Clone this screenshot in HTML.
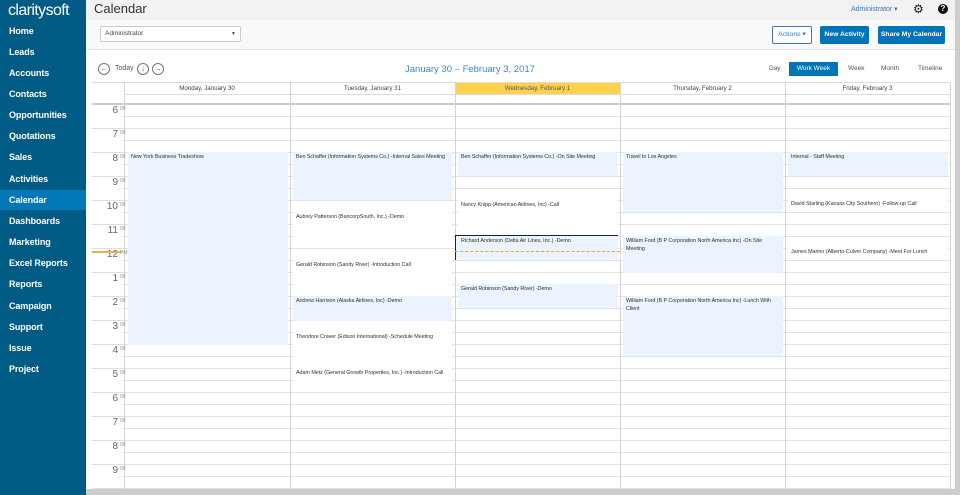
<!DOCTYPE html>
<html><head><meta charset="utf-8"><style>
*{margin:0;padding:0;box-sizing:border-box}
body{width:960px;height:495px;overflow:hidden;background:#ccc;font-family:"Liberation Sans",sans-serif;position:relative}
.a{position:absolute}
#side{left:0;top:0;width:86px;height:495px;background:#005b85}
#side .logo{left:8px;top:2px;color:#fff;font-size:16px;letter-spacing:-0.6px}
#side .it{left:9px;color:#fff;font-size:9px;font-weight:bold;height:21px;line-height:21px;letter-spacing:-0.1px}
#main{left:86px;top:0;width:869px;height:489px;background:#fff}
.ev{position:absolute;font-size:5.4px;color:#333;padding:2px 3px;line-height:7.5px;letter-spacing:-0.05px}
.bl{background:#eaf3fe}
.wh{background:#fff}
.hd{position:absolute;top:82px;height:12px;font-size:6.2px;color:#444;text-align:center;line-height:12px;border-top:1px solid #ddd}
.tl{position:absolute;left:100px;font-size:10px;color:#666;width:18px;text-align:right}
.tl sup{font-size:5px;position:absolute;left:20px;top:1px;color:#888}
.btn{position:absolute;top:26px;height:18px;font-size:6.8px;font-weight:bold;line-height:18px;text-align:center;color:#fff;background:#0074b7;border-radius:2px}
.circ{position:absolute;top:63px;width:12px;height:12px;border:1px solid #777;border-radius:50%;font-size:8px;line-height:10px;text-align:center;color:#777}
</style></head><body>
<div id="side" class="a">
<div class="a logo">claritysoft</div>
<div class="a" style="left:0;top:190px;width:86px;height:20px;background:#0077b6"></div>
<div class="a it" style="top:21px">Home</div>
<div class="a it" style="top:42px">Leads</div>
<div class="a it" style="top:63px">Accounts</div>
<div class="a it" style="top:84px">Contacts</div>
<div class="a it" style="top:105px">Opportunities</div>
<div class="a it" style="top:126px">Quotations</div>
<div class="a it" style="top:147px">Sales</div>
<div class="a it" style="top:169px">Activities</div>
<div class="a it" style="top:190px">Calendar</div>
<div class="a it" style="top:211px">Dashboards</div>
<div class="a it" style="top:232px">Marketing</div>
<div class="a it" style="top:253px">Excel Reports</div>
<div class="a it" style="top:274px">Reports</div>
<div class="a it" style="top:296px">Campaign</div>
<div class="a it" style="top:317px">Support</div>
<div class="a it" style="top:338px">Issue</div>
<div class="a it" style="top:359px">Project</div>
</div>
<div id="main" class="a"></div>
<div class="a" style="left:86px;top:0;width:869px;height:20px;background:#f2f2f2"></div>
<div class="a" style="left:94px;top:1px;font-size:13px;color:#333">Calendar</div>
<div class="a" style="left:851px;top:5px;font-size:7px;color:#3a7ab8">Administrator ▾</div>
<div class="a" style="left:913px;top:2px;font-size:12px;color:#111">⚙</div>
<div class="a" style="left:938px;top:4px;width:10px;height:10px;border-radius:50%;background:#111;color:#fff;font-size:8px;font-weight:bold;text-align:center;line-height:10px">?</div>
<div class="a" style="left:86px;top:20px;width:869px;height:30px;background:#f9f9f9;border-bottom:1px solid #e2e2e2"></div>
<div class="a" style="left:100px;top:26px;width:141px;height:16px;background:#fff;border:1px solid #ccc;border-radius:2px;font-size:6.5px;color:#444;line-height:14px;padding-left:4px">Administrator<span style="position:absolute;right:4px;font-size:5px">▼</span></div>
<div class="btn" style="left:772px;width:40px;background:#fff;color:#3a7ab8;border:1px solid #3a7ab8;font-weight:normal;line-height:16px">Actions ▾</div>
<div class="btn" style="left:820px;width:49px">New Activity</div>
<div class="btn" style="left:878px;width:67px">Share My Calendar</div>
<div class="circ" style="left:98px">←</div>
<div class="a" style="left:115px;top:65px;font-size:7px;color:#555">Today</div>
<div class="circ" style="left:137px">↓</div>
<div class="circ" style="left:152px">→</div>
<div class="a" style="left:405px;top:64px;font-size:9.5px;color:#3a86c8">January 30 – February 3, 2017</div>
<div class="a" style="left:769px;top:65px;font-size:6.5px;color:#555">Day</div>
<div class="a" style="left:789px;top:62px;width:49px;height:14px;background:#0074b7;color:#fff;font-size:6.5px;text-align:center;line-height:14px">Work Week</div>
<div class="a" style="left:848px;top:65px;font-size:6.5px;color:#555">Week</div>
<div class="a" style="left:881px;top:65px;font-size:6.5px;color:#555">Month</div>
<div class="a" style="left:918px;top:65px;font-size:6.5px;color:#555">Timeline</div>
<!-- headers -->
<div class="a" style="left:92px;top:82px;width:858px;height:1px;background:#ddd"></div>
<div class="hd" style="left:124px;width:166px">Monday, January 30</div>
<div class="hd" style="left:290px;width:165px">Tuesday, January 31</div>
<div class="hd" style="left:455px;width:165px;background:#ffd24d;color:#555">Wednesday, February 1</div>
<div class="hd" style="left:620px;width:165px">Thursday, February 2</div>
<div class="hd" style="left:785px;width:165px">Friday, February 3</div>
<div class="a" style="left:124px;top:94px;width:826px;height:1px;background:#ddd"></div>
<div class="a" style="left:92px;top:103px;width:858px;height:2px;background:#ccc"></div>
<!-- grid -->
<div class="a" style="left:124px;top:105px;width:826px;height:384px;background:repeating-linear-gradient(to bottom,transparent 0,transparent 11px,#e2e2e2 11px,#e2e2e2 12px)"></div>
<div class="a" style="left:92px;top:105px;width:32px;height:384px;background:repeating-linear-gradient(to bottom,transparent 0,transparent 23px,#ddd 23px,#ddd 24px)"></div>
<div class="a" style="left:124px;top:82px;width:1px;height:407px;background:#d4d4d4"></div>
<div class="a" style="left:290px;top:82px;width:1px;height:407px;background:#d4d4d4"></div>
<div class="a" style="left:455px;top:82px;width:1px;height:407px;background:#d4d4d4"></div>
<div class="a" style="left:620px;top:82px;width:1px;height:407px;background:#d4d4d4"></div>
<div class="a" style="left:785px;top:82px;width:1px;height:407px;background:#d4d4d4"></div>
<div class="a" style="left:950px;top:82px;width:1px;height:407px;background:#d4d4d4"></div>
<!-- time labels -->
<div class="tl" style="top:105px">6<sup>00</sup></div>
<div class="tl" style="top:129px">7<sup>00</sup></div>
<div class="tl" style="top:153px">8<sup>00</sup></div>
<div class="tl" style="top:177px">9<sup>00</sup></div>
<div class="tl" style="top:201px">10<sup>00</sup></div>
<div class="tl" style="top:225px">11<sup>00</sup></div>
<div class="tl" style="top:249px">12<sup>PM</sup></div>
<div class="tl" style="top:273px">1<sup>00</sup></div>
<div class="tl" style="top:297px">2<sup>00</sup></div>
<div class="tl" style="top:321px">3<sup>00</sup></div>
<div class="tl" style="top:345px">4<sup>00</sup></div>
<div class="tl" style="top:369px">5<sup>00</sup></div>
<div class="tl" style="top:393px">6<sup>00</sup></div>
<div class="tl" style="top:417px">7<sup>00</sup></div>
<div class="tl" style="top:441px">8<sup>00</sup></div>
<div class="tl" style="top:465px">9<sup>00</sup></div>
<div class="a" style="left:92px;top:251px;width:30px;height:2px;background:#e8b04a"></div>
<div class="a" style="left:455px;top:251px;width:165px;height:1px;border-top:1px dashed #e8a33a;z-index:2"></div>
<!-- events -->
<div class="ev bl" style="left:128px;top:152px;width:160px;height:193px">New York Business Tradeshow</div>
<div class="ev bl" style="left:293px;top:152px;width:159px;height:48px">Ben Schaffer (Information Systems Co.) -Internal Sales Meeting</div>
<div class="ev wh" style="left:293px;top:212px;width:159px;height:34px">Aubrey Patterson (BancorpSouth, Inc.) -Demo</div>
<div class="ev wh" style="left:293px;top:260px;width:159px;height:34px">Gerald Robinson (Sandy River) -Introduction Call</div>
<div class="ev bl" style="left:293px;top:296px;width:159px;height:25px">Andrew Harrison (Alaska Airlines, Inc) -Demo</div>
<div class="ev wh" style="left:293px;top:332px;width:159px;height:34px">Theodore Craver (Edison International) -Schedule Meeting</div>
<div class="ev wh" style="left:293px;top:368px;width:159px;height:22px">Adam Metz (General Growth Properties, Inc.) -Introduction Call</div>
<div class="ev bl" style="left:458px;top:152px;width:160px;height:24px">Ben Schaffer (Information Systems Co.) -On Site Meeting</div>
<div class="ev wh" style="left:458px;top:200px;width:160px;height:34px">Nancy Knipp (American Airlines, Inc) -Call</div>
<div class="ev bl" style="left:455px;top:235px;width:163px;height:25px;border-top:1px solid #222;border-left:1px solid #222;padding-left:5px">Richard Anderson (Delta Air Lines, Inc.) -Demo</div>
<div class="ev bl" style="left:458px;top:284px;width:160px;height:24px">Gerald Robinson (Sandy River) -Demo</div>
<div class="ev bl" style="left:623px;top:152px;width:160px;height:60px">Travel to Los Angeles</div>
<div class="ev bl" style="left:623px;top:236px;width:160px;height:37px">William Ford (B P Corporation North America Inc) -On Site Meeting</div>
<div class="ev bl" style="left:623px;top:296px;width:160px;height:60px">William Ford (B P Corporation North America Inc) -Lunch With Client</div>
<div class="ev bl" style="left:788px;top:152px;width:160px;height:24px">Internal - Staff Meeting</div>
<div class="ev wh" style="left:788px;top:200px;width:160px;height:11px;padding-top:1px">David Starling (Kansas City Southern) -Follow-up Call</div>
<div class="ev wh" style="left:788px;top:248px;width:160px;height:11px;padding-top:1px">James Marino (Alberto-Culver Company) -Meet For Lunch</div>
</body></html>
